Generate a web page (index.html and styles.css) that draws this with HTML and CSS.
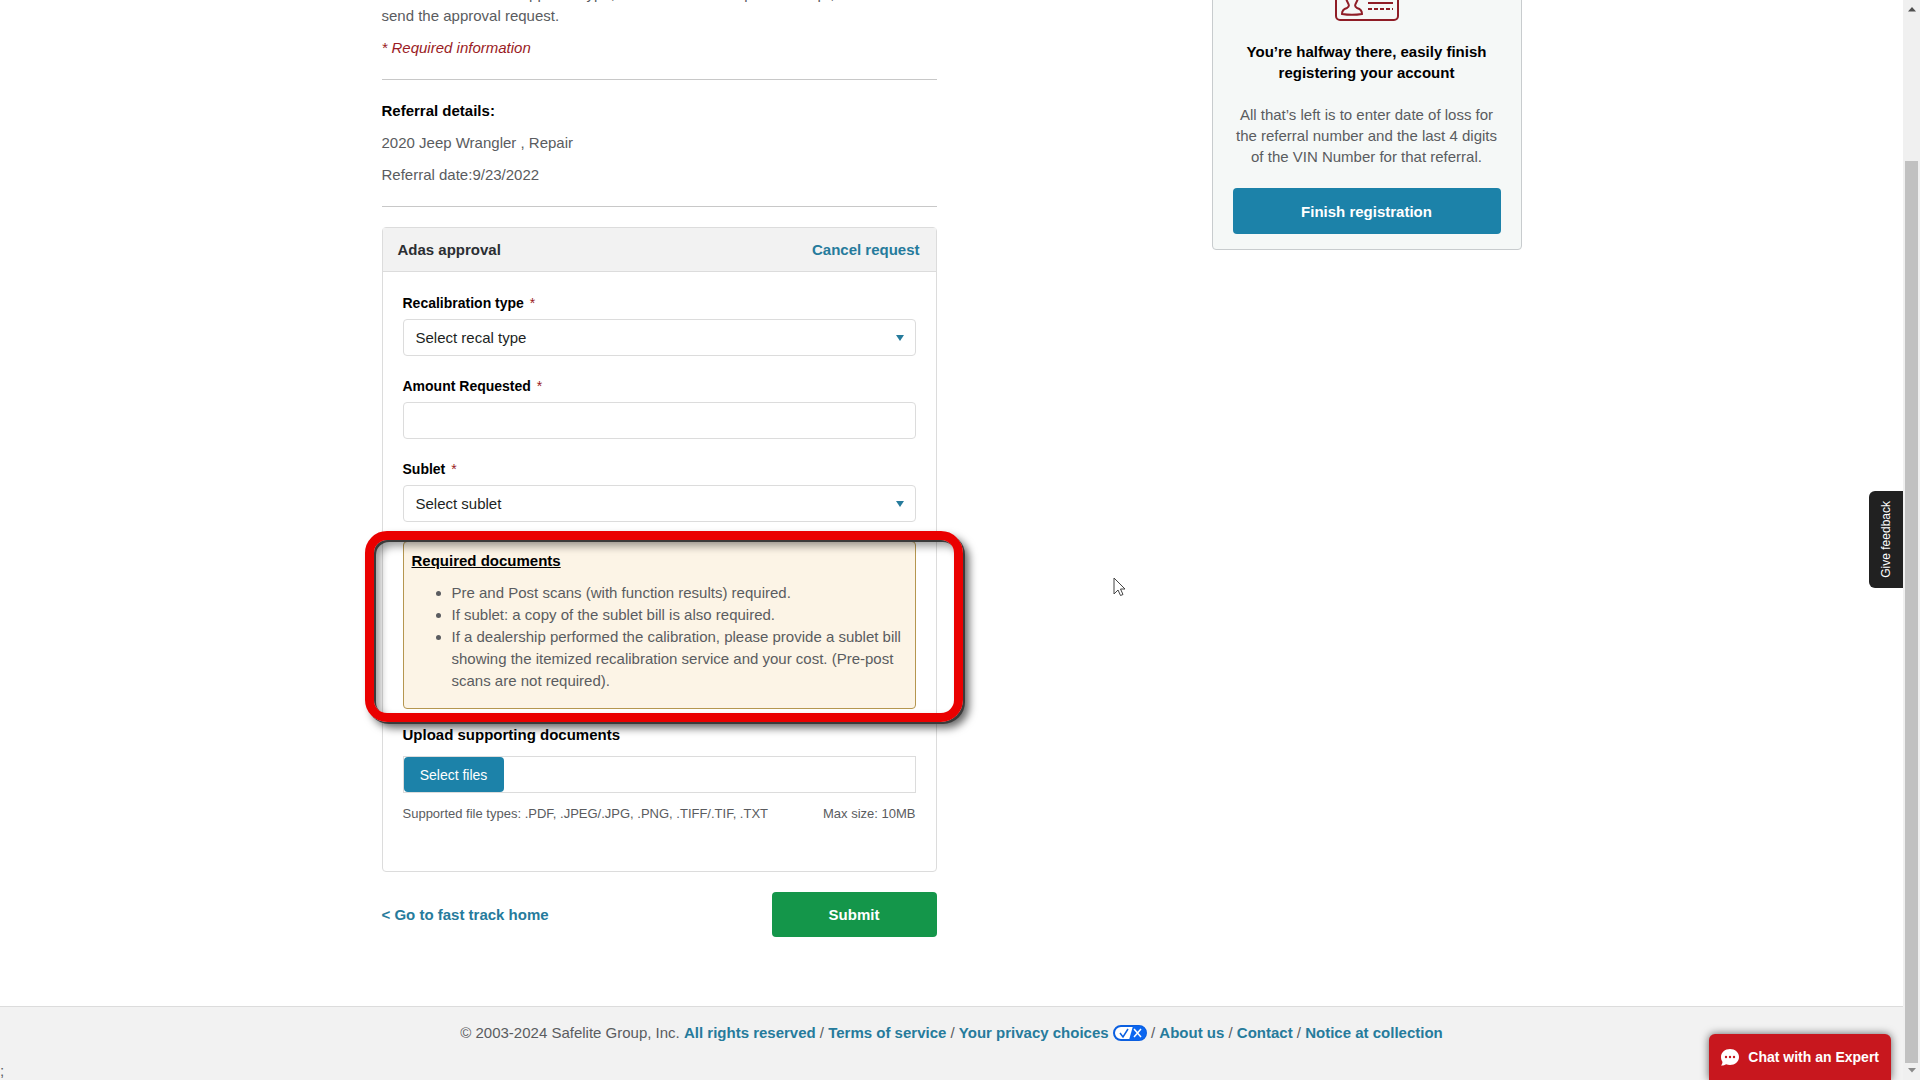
FILE: index.html
```html
<!DOCTYPE html>
<html lang="en">
<head>
<meta charset="utf-8">
<title>ADAS approval request</title>
<link rel="stylesheet" href="styles.css">
</head>
<body>
<div class="window">
  <div class="page">
    <main class="container">
      <form class="request" onsubmit="return false">
        <p class="intro">Please choose recal approval type, amount and then upload receipt, and<br>send the approval request.</p>
        <p class="required-info">* Required information</p>
        <hr>
        <section class="referral">
          <h2>Referral details:</h2>
          <p>2020 Jeep Wrangler , Repair</p>
          <p>Referral date:9/23/2022</p>
        </section>
        <hr>
        <section class="panel">
          <header class="panel-head">
            <h3>Adas approval</h3>
            <a href="#">Cancel request</a>
          </header>
          <div class="panel-body">
            <div class="field">
              <label for="recal">Recalibration type <span class="star">*</span></label>
              <div class="select-wrap">
                <select id="recal" class="control"><option>Select recal type</option></select>
              </div>
            </div>
            <div class="field">
              <label for="amount">Amount Requested <span class="star">*</span></label>
              <input id="amount" class="control" type="text">
            </div>
            <div class="field">
              <label for="sublet">Sublet <span class="star">*</span></label>
              <div class="select-wrap">
                <select id="sublet" class="control"><option>Select sublet</option></select>
              </div>
            </div>
            <div class="note">
              <h4>Required documents</h4>
              <ul>
                <li>Pre and Post scans (with function results) required.</li>
                <li>If sublet: a copy of the sublet bill is also required.</li>
                <li>If a dealership performed the calibration, please provide a sublet bill showing the itemized recalibration service and your cost. (Pre-post scans are not required).</li>
              </ul>
              <div class="highlight"></div>
            </div>
            <h4 class="upload-title">Upload supporting documents</h4>
            <div class="upload"><button type="button" class="btn-files">Select files</button></div>
            <div class="hints"><span>Supported file types: .PDF, .JPEG/.JPG, .PNG, .TIFF/.TIF, .TXT</span><span>Max size: 10MB</span></div>
          </div>
        </section>
        <div class="actions">
          <a href="#">&lt; Go to fast track home</a>
          <button type="submit" class="btn-submit">Submit</button>
        </div>
      </form>
      <aside class="promo">
        <svg class="promo-icon" width="64" height="44" viewBox="0 0 64 44" fill="none" stroke="#8f1d26" stroke-width="2">
          <rect x="1" y="1" width="62" height="42" rx="4"/>
          <path d="M17 16c-5 0-7 4-5 8 2 4 3 5 0 7-4 1-5 3-5 6 6 1 14 1 20 0 0-3-1-5-5-6-3-2-2-3 0-7 2-4 0-8-5-8z"/>
          <path d="M33 26h25"/>
          <path d="M33 32h25" stroke-dasharray="4 2"/>
        </svg>
        <h3>You’re halfway there, easily finish registering your account</h3>
        <p>All that’s left is to enter date of loss for the referral number and the last 4 digits of the VIN Number for that referral.</p>
        <button type="button" class="btn-finish">Finish registration</button>
      </aside>
    </main>
    <footer class="footer">
      <span>© 2003-2024 Safelite Group, Inc. <a href="#">All rights reserved</a> / <a href="#">Terms of service</a> / <a href="#">Your privacy choices <svg class="privacy" width="34" height="16" viewBox="0 0 34 16"><rect x="1" y="1" width="32" height="14" rx="7" fill="#fff" stroke="#0b5fe0" stroke-width="2"/><path d="M20 1h6a7 7 0 0 1 0 14H16z" fill="#0b66f0"/><path d="M7 8l3 4 5-8" fill="none" stroke="#0b5fe0" stroke-width="1.500"/><path d="M21 4l7 8M28 4l-7 8" stroke="#fff" stroke-width="1.500"/></svg></a> / <a href="#">About us</a> / <a href="#">Contact</a> / <a href="#">Notice at collection</a></span>
    </footer>
    <span class="stray">;</span>
    <button type="button" class="feedback">Give feedback</button>
    <button type="button" class="chat">
      <svg width="18" height="17" viewBox="0 0 18 17"><path d="M9 0c5 0 9 3.500 9 8s-4 8-9 8c-1.400 0-2.700-.3-3.900-.8C3.700 16.200 2 16.600 0 16.500c.9-1 1.400-2.200 1.500-3.600C.5 11.500 0 9.900 0 8c0-4.500 4-8 9-8z" fill="#fff"/><g fill="#c8171e"><circle cx="5" cy="8" r="1.200"/><circle cx="9" cy="8" r="1.200"/><circle cx="13" cy="8" r="1.200"/></g></svg>
      Chat with an Expert
    </button>
    <svg class="cursor" width="13" height="20" viewBox="0 0 13 20"><path d="M1 1v16l4-4 2.500 5.500 2.500-1L7.500 12H12z" fill="#fff" stroke="#444"/></svg>
  </div>
  <div class="scrollbar">
    <svg width="8" height="5" viewBox="0 0 8 5"><path d="M4 0l4 4.500H0z" fill="#505050"/></svg>
    <div class="thumb"></div>
    <svg width="8" height="5" viewBox="0 0 8 5"><path d="M0 0h8L4 4.500z" fill="#8a8a8a"/></svg>
  </div>
</div>
</body>
</html>
```
FILE: styles.css
```css
* { box-sizing: border-box; }

body {
  margin: 0;
  font: 15px/22px "Liberation Sans", Arial, sans-serif;
  color: #5a5c60;
  background: #fff;
}

h2, h3, h4, p, ul { margin: 0; }
h2, h3, h4 { font-size: 15px; line-height: 22px; font-weight: 700; color: #000; }
a { color: #267b9c; font-weight: 700; text-decoration: none; }
button, select, input { font-family: inherit; }
button { border: 0; cursor: pointer; color: #fff; }

.window { display: flex; height: 100vh; overflow: hidden; }
.page {
  flex: 1;
  position: relative;
  display: flex;
  flex-direction: column;
  min-width: 0;
  overflow: hidden;
}

.container {
  flex: 1;
  display: flex;
  justify-content: space-between;
  align-items: flex-start;
  width: 100%;
  max-width: 1140px;
  margin: 0 auto;
}

/* main column, scrolled past the page heading */
.request { width: 555px; margin-top: -17px; }
.request p { margin-bottom: 10px; }
.required-info { font-style: italic; color: #9a1b24; }
hr { border: 0; border-top: 1px solid #c8c8c8; margin: 20px 0; }
.referral h2 { margin-bottom: 10px; }

.panel { border: 1px solid #dcdcdc; border-radius: 4px; }
.panel-head {
  display: flex;
  justify-content: space-between;
  align-items: center;
  height: 44px;
  padding: 0 16px 0 15px;
  background: #f2f2f2;
  border-bottom: 1px solid #dcdcdc;
}
.panel-head h3 { color: #2b2e33; }
.panel-body { padding: 20px 20px 46px; }

.field { margin-bottom: 19px; }
.field label {
  display: block;
  margin-bottom: 5px;
  font-size: 14px;
  font-weight: 700;
  color: #000;
}
.star { margin-left: 2px; font-weight: 400; color: #9a1b24; }
.control {
  display: block;
  width: 100%;
  height: 37px;
  padding: 0 12px;
  border: 1px solid #dcdcdc;
  border-radius: 4px;
  background: #fff;
  color: #1c1f23;
  font-size: 15px;
  appearance: none;
}
.select-wrap { position: relative; }
.select-wrap::after {
  content: "";
  position: absolute;
  right: 12px;
  top: 16px;
  border: 4px solid transparent;
  border-top: 6px solid #267b9c;
  border-bottom: 0;
}

.note {
  position: relative;
  margin-bottom: 15px;
  padding: 8px;
  border: 1px solid #b5964f;
  border-radius: 4px;
  background: #fcf4e6;
}
.note h4 { text-decoration: underline; margin-bottom: 10px; }
.note ul { padding-left: 40px; margin-bottom: 8px; }
.highlight {
  position: absolute;
  inset: -11px -48px -14px -39px;
  border: 9px solid #ea0000;
  border-radius: 22px;
  box-shadow: 2px 2px 0 #3a3a3a, 6px 6px 8px rgba(0, 0, 0, .6),
    inset 2px 2px 0 #3a3a3a, inset 6px 6px 8px rgba(0, 0, 0, .4);
}

.upload-title { margin-bottom: 10px; }
.upload { display: flex; height: 37px; border: 1px solid #dcdcdc; }
.btn-files { width: 100px; border-radius: 4px; background: #1c82a9; font-size: 14px; }
.hints { display: flex; justify-content: space-between; margin-top: 10px; font-size: 13px; }

.actions { display: flex; justify-content: space-between; align-items: center; margin-top: 20px; }
.btn-submit {
  width: 165px;
  height: 45px;
  border-radius: 4px;
  background: #14964a;
  font-size: 15px;
  font-weight: 700;
}

.promo {
  width: 310px;
  margin-top: -44px;
  padding: 20px 20px 15px;
  border: 1px solid #c8ccce;
  border-radius: 4px;
  background: #f5f8f7;
  text-align: center;
}
.promo-icon { display: block; margin: 0 auto 20px; }
.promo h3, .promo p { line-height: 21px; }
.promo p { margin: 21px 0; }
.btn-finish {
  width: 100%;
  height: 46px;
  border-radius: 4px;
  background: #1c82a9;
  font-size: 15px;
  font-weight: 700;
}

.footer {
  height: 74px;
  padding-top: 15px;
  border-top: 1px solid #dcdcdc;
  background: #f2f2f2;
  text-align: center;
}
.privacy { vertical-align: -3px; }
.stray { position: absolute; left: 0; bottom: -2px; }

.feedback {
  position: absolute;
  right: 0;
  top: 491px;
  width: 34px;
  height: 97px;
  padding: 0;
  border-radius: 6px 0 0 6px;
  background: #212121;
  writing-mode: sideways-lr;
  font-size: 12px;
}
.chat {
  position: absolute;
  right: 12px;
  bottom: 0;
  display: flex;
  align-items: center;
  gap: 9px;
  height: 46px;
  padding: 0 12px;
  border-radius: 6px 6px 0 0;
  background: #c8171e;
  box-shadow: 0 0 8px rgba(0, 0, 0, .6);
  font-size: 14px;
  font-weight: 700;
}
.cursor { position: absolute; left: 1113px; top: 577px; }

.scrollbar {
  display: flex;
  flex-direction: column;
  align-items: center;
  width: 17px;
  padding: 7px 0;
  background: #f0f0f0;
}
.thumb { width: 13px; flex: 1; margin: 149px 0 5px; background: #c1c1c1; }
```
